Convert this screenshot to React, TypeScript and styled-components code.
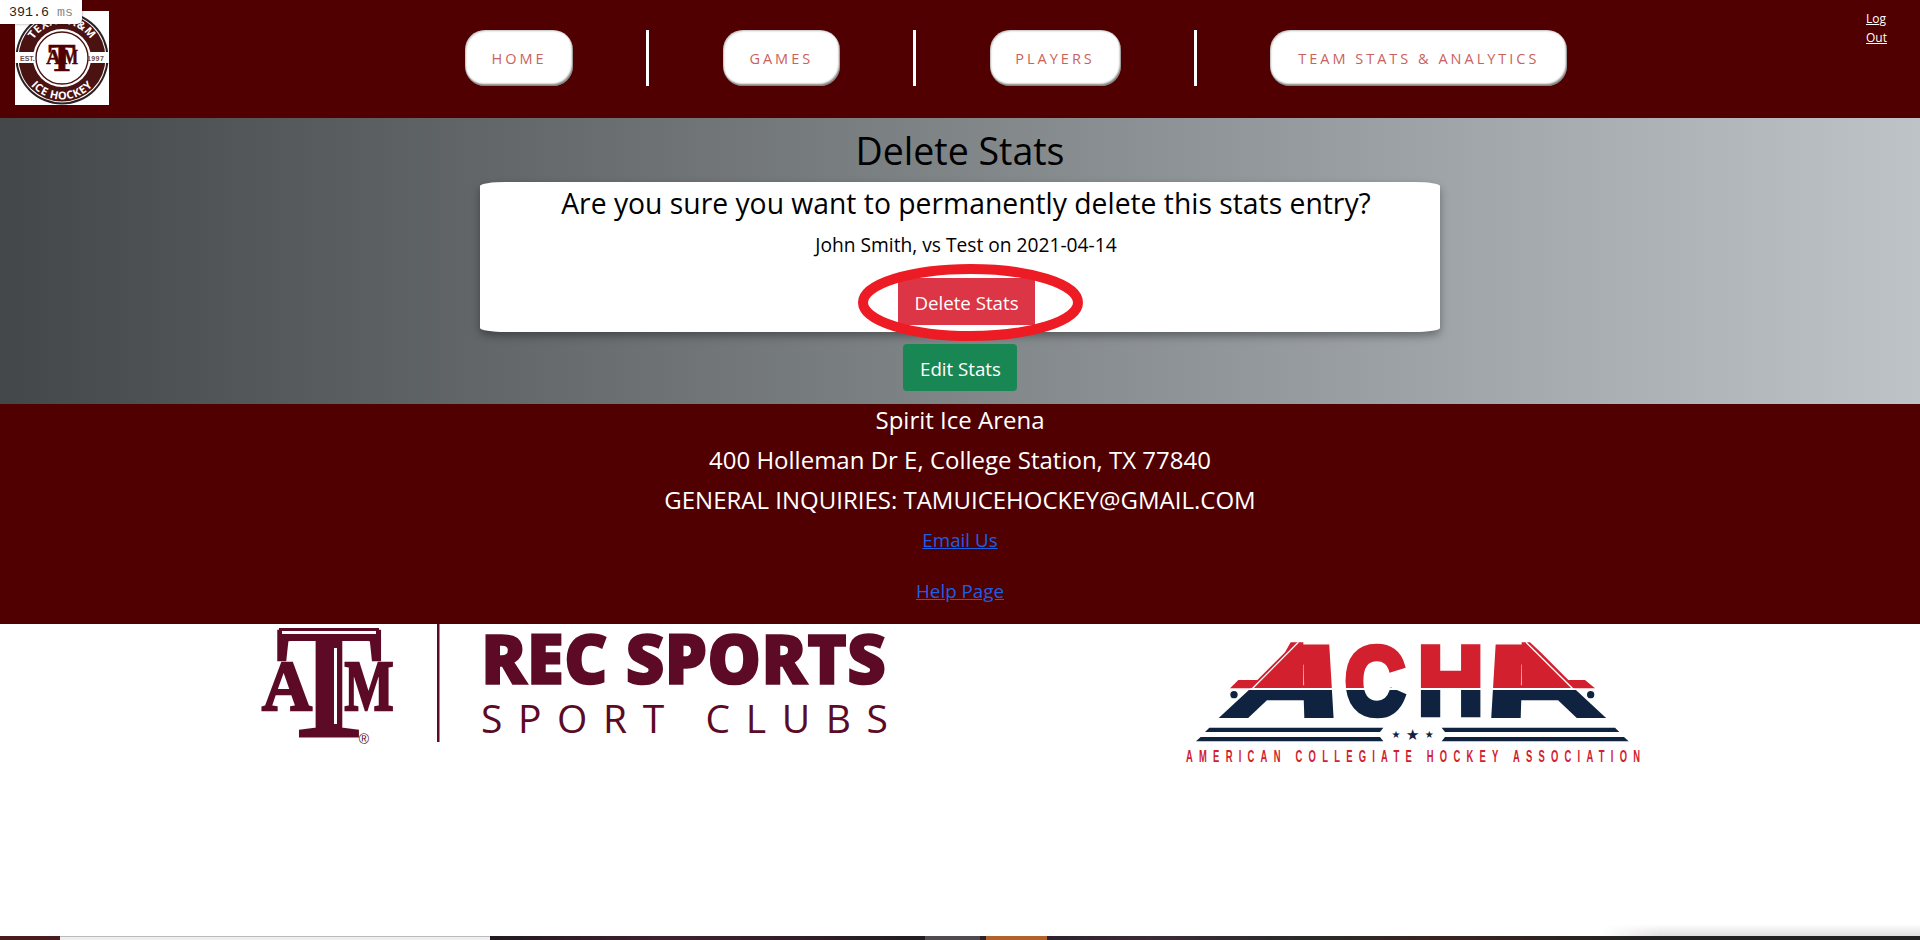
import React from 'react';
import styled, { createGlobalStyle } from 'styled-components';

const Global = createGlobalStyle`
    html, body {
        margin: 0;
        padding: 0;
        background: #ffffff;
    }
    body {
        font-family: "Open Sans", "Noto Sans", "Liberation Sans", sans-serif;
    }
`;

const Page = styled.div`
    position: relative;
    display: flex;
    flex-direction: column;
    height: 940px;
    overflow: hidden;
`;

const Timer = styled.div`
    position: absolute;
    top: 0;
    left: 0;
    width: 82px;
    height: 24px;
    display: flex;
    align-items: center;
    justify-content: center;
    gap: 8px;
    background: #ffffff;
    border-bottom-right-radius: 5px;
    box-shadow: 0 0 3px rgba(0, 0, 0, 0.4);
    font-family: "Liberation Mono", monospace;
    font-size: 13.3px;
    color: #222222;
    z-index: 10;
    span {
        color: #888888;
    }
`;

const Header = styled.header`
    display: flex;
    align-items: flex-start;
    height: 118px;
    padding-left: 15px;
    background-color: #500000;
`;

const LogoBox = styled.div`
    width: 94px;
    height: 94px;
    margin-top: 11px;
    background: #ffffff;
    svg {
        display: block;
    }
`;

const Nav = styled.nav`
    display: flex;
    align-items: center;
    gap: 73.4px;
    height: 56px;
    margin-top: 30px;
    margin-left: 356px;
`;

const NavButton = styled.a<{ $w: number }>`
    display: flex;
    align-items: center;
    justify-content: center;
    box-sizing: border-box;
    width: ${({ $w }) => $w}px;
    height: 56px;
    background: #ffffff;
    border-radius: 20px;
    box-shadow: inset -1px -2px 2px rgba(0, 0, 0, 0.5), inset 1px 1px 2px rgba(0, 0, 0, 0.25);
    color: #c9625c;
    font-size: 14.5px;
    letter-spacing: 3px;
    white-space: nowrap;
`;

const NavDivider = styled.div`
    width: 3px;
    height: 56px;
    background: #ffffff;
`;

const LogOut = styled.a`
    width: 24px;
    margin-left: auto;
    margin-right: 30px;
    margin-top: 9px;
    color: #ffffff;
    font-size: 12px;
    line-height: 19px;
    text-decoration: underline;
`;

const Hero = styled.section`
    display: flex;
    flex-direction: column;
    align-items: center;
    padding-bottom: 13px;
    background: linear-gradient(to right, #434749, #bdc3c7);
`;

const Title = styled.h2`
    margin: 0;
    height: 64px;
    line-height: 66px;
    font-size: 37.5px;
    font-weight: 400;
    color: #000000;
`;

const Card = styled.div`
    box-sizing: border-box;
    display: flex;
    flex-direction: column;
    align-items: center;
    width: 960px;
    height: 150px;
    padding-left: 12px;
    background: #ffffff;
    border-radius: 26px / 4px;
    box-shadow: 0 4px 8px rgba(0, 0, 0, 0.35);
`;

const Question = styled.h3`
    margin: 0;
    line-height: 42px;
    font-size: 28.3px;
    font-weight: 400;
    color: #000000;
`;

const Detail = styled.p`
    margin: 7px 0 0;
    line-height: 28px;
    font-size: 19.2px;
    color: #000000;
`;

const DeleteWrap = styled.div`
    position: relative;
    margin-top: 19px;
`;

const Button = styled.button<{ $tone: 'red' | 'green' }>`
    display: block;
    border: 0;
    padding: 0 0 0 1px;
    height: 47px;
    width: ${({ $tone }) => ($tone === 'red' ? 137 : 114)}px;
    border-radius: ${({ $tone }) => ($tone === 'red' ? 0 : 4)}px;
    background: ${({ $tone }) => ($tone === 'red' ? '#dc3545' : '#198754')};
    color: #ffffff;
    font-family: inherit;
    font-size: 18.7px;
    line-height: 49px;
`;

const EditButton = styled(Button)`
    margin-top: 12px;
`;

const Scribble = styled.svg`
    position: absolute;
    left: -40px;
    top: -14px;
    pointer-events: none;
`;

const Footer = styled.footer`
    display: flex;
    flex-direction: column;
    align-items: center;
    gap: 8px;
    height: 220px;
    background-color: #500000;
    color: #ffffff;
`;

const FooterLine = styled.p`
    margin: 0;
    line-height: 32px;
    font-size: 24px;
`;

const FooterLink = styled.a<{ $gap?: number }>`
    margin-top: ${({ $gap }) => $gap || 0}px;
    line-height: 32px;
    font-size: 18.8px;
    color: #1a5fe6;
    text-decoration: underline;
`;

const Sponsors = styled.section`
    flex: 1;
    display: flex;
    align-items: flex-start;
    padding-left: 262px;
    background: #ffffff;
    position: relative;
    svg {
        display: block;
        overflow: visible;
    }
`;

const AchaSlot = styled.div`
    margin-left: 278px;
    margin-top: 1px;
`;

const BottomShade = styled.div`
    position: absolute;
    right: 0;
    bottom: 0;
    width: 320px;
    height: 12px;
    background: linear-gradient(to bottom, rgba(0, 0, 0, 0), rgba(0, 0, 0, 0.12));
    mask-image: linear-gradient(to right, transparent, #000 60px);
`;

const Strip = styled.div`
    display: flex;
    height: 4px;
`;

const StripPart = styled.div<{ $w?: number; $bg: string }>`
    flex: ${({ $w }) => ($w ? `0 0 ${$w}px` : '1')};
    background: ${({ $bg }) => $bg};
`;

const MAROON = '#5c0a26';
const RED = '#d2202f';
const NAVY = '#0f2240';

const TeamLogo = () => (
    <svg width="94" height="94" viewBox="0 0 94 94">
        <defs>
            <path id="arcTop" d="M 13 47 A 34 34 0 0 1 81 47" />
            <path id="arcBottom" d="M 5.5 47 A 41.5 41.5 0 0 0 88.5 47" />
        </defs>
        <circle cx="47" cy="47" r="46.5" fill="#2a2022" />
        <circle cx="47" cy="47" r="44.5" fill="#ffffff" />
        <circle cx="47" cy="47" r="43.5" fill="#4b1212" />
        <rect x="0" y="41" width="94" height="11" fill="#ffffff" />
        <circle cx="47" cy="47" r="29" fill="#ffffff" />
        <circle cx="47" cy="47" r="26" fill="none" stroke="#4b1212" strokeWidth="1.4" />
        <circle cx="47" cy="47" r="24.5" fill="#ffffff" />
        <text fontFamily="Open Sans, sans-serif" fontWeight="700" fontSize="11" fill="#ffffff" letterSpacing="0.6" textAnchor="middle">
            <textPath href="#arcTop" startOffset="50%">TEXAS A&amp;M</textPath>
        </text>
        <text fontFamily="Open Sans, sans-serif" fontWeight="700" fontSize="11" fill="#ffffff" letterSpacing="0.6" textAnchor="middle">
            <textPath href="#arcBottom" startOffset="50%">ICE HOCKEY</textPath>
        </text>
        <text x="5" y="49.5" fontFamily="Liberation Sans, sans-serif" fontWeight="700" fontSize="7" fill="#6b4a4c">EST.</text>
        <text x="72" y="49.5" fontFamily="Liberation Sans, sans-serif" fontWeight="700" fontSize="7" letterSpacing="0.4" fill="#6b4a4c">1997</text>
        <text x="47" y="60" textAnchor="middle" fontFamily="Liberation Serif, serif" fontWeight="700" fontSize="41" fill="#500000" stroke="#500000" strokeWidth="0.6">T</text>
        <text x="38.5" y="53" textAnchor="middle" fontFamily="Liberation Serif, serif" fontWeight="700" fontSize="20" fill="#500000" stroke="#500000" strokeWidth="0.6">A</text>
        <text x="55.5" y="53" textAnchor="middle" fontFamily="Liberation Serif, serif" fontWeight="700" fontSize="20" fill="#500000" stroke="#500000" strokeWidth="0.6" textLength="15" lengthAdjust="spacingAndGlyphs">M</text>
    </svg>
);

const RecSportsLogo = () => (
    <svg width="630" height="122" viewBox="0 0 630 122">
        <text x="67" y="112" textAnchor="middle" fontFamily="Liberation Serif, serif" fontWeight="700" fontSize="160" fill={MAROON} stroke={MAROON} strokeWidth="2">T</text>
        <rect x="17" y="4" width="100" height="13" fill={MAROON} />
        <rect x="20" y="7" width="94" height="3" fill="#ffffff" />
        <rect x="72" y="24" width="3" height="76" fill="#ffffff" />
        <text x="25" y="86" textAnchor="middle" fontFamily="Liberation Serif, serif" fontWeight="700" fontSize="71" fill={MAROON} stroke={MAROON} strokeWidth="2.5" textLength="50" lengthAdjust="spacingAndGlyphs">A</text>
        <text x="107" y="86" textAnchor="middle" fontFamily="Liberation Serif, serif" fontWeight="700" fontSize="71" fill={MAROON} stroke={MAROON} strokeWidth="2.5" textLength="49" lengthAdjust="spacingAndGlyphs">M</text>
        <text x="102" y="120" textAnchor="middle" fontFamily="Liberation Sans, sans-serif" fontSize="14" fill={MAROON}>®</text>
        <rect x="175" y="0" width="2.5" height="118" fill={MAROON} />
        <text x="219" y="60" fontFamily="Open Sans, sans-serif" fontWeight="800" fontSize="69" fill={MAROON} stroke={MAROON} strokeWidth="1.5" textLength="405" lengthAdjust="spacingAndGlyphs">REC SPORTS</text>
        <text x="219" y="109" fontFamily="Open Sans, sans-serif" fontSize="39" fill={MAROON} textLength="407">SPORT CLUBS</text>
    </svg>
);

const achaLetter = {
    fontFamily: 'Liberation Sans, sans-serif',
    fontWeight: 700,
    fill: 'url(#achaFill)',
    stroke: 'url(#achaFill)',
    lengthAdjust: 'spacingAndGlyphs',
} as const;

const AchaLogo = () => (
    <svg width="490" height="150" viewBox="0 0 1470 450">
        <defs>
            <linearGradient id="achaFill" x1="0" y1="-226" x2="0" y2="0" gradientUnits="userSpaceOnUse">
                <stop offset="0.61" stopColor={RED} />
                <stop offset="0.61" stopColor="#ffffff" />
                <stop offset="0.635" stopColor="#ffffff" />
                <stop offset="0.635" stopColor={NAVY} />
            </linearGradient>
        </defs>
        <polygon points="180,190 205,165 262,165 345,82 362,52 400,52 400,190" fill={RED} />
        <polygon points="1275,190 1245,165 1195,165 1112,82 1080,52 1055,52 1055,190" fill={RED} />
        <text transform="translate(148 278) skewX(-27)" {...achaLetter} y="-5" fontSize="303" strokeWidth="12" textLength="342">A</text>
        <text transform="translate(515 278)" {...achaLetter} x="10" y="-10" fontSize="288" strokeWidth="20" textLength="180">C</text>
        <text transform="translate(742 278)" {...achaLetter} x="2" y="-10" fontSize="288" strokeWidth="20" textLength="196">H</text>
        <text transform="translate(965 278) skewX(27)" {...achaLetter} y="-5" fontSize="303" strokeWidth="12" textLength="342">A</text>
        <line x1="248" y1="190" x2="385" y2="52" stroke="#ffffff" strokeWidth="4" />
        <line x1="1207" y1="190" x2="1068" y2="52" stroke="#ffffff" strokeWidth="4" />
        <circle cx="192" cy="209" r="13" fill={NAVY} stroke="#ffffff" strokeWidth="4" />
        <circle cx="1262" cy="209" r="13" fill={NAVY} stroke="#ffffff" strokeWidth="4" />
        <polygon points="118,308 640,308 630,321 105,321" fill={NAVY} />
        <polygon points="92,336 630,336 640,349 78,349" fill={NAVY} />
        <polygon points="815,308 1335,308 1348,321 825,321" fill={NAVY} />
        <polygon points="825,336 1362,336 1376,349 815,349" fill={NAVY} />
        <text x="678" y="340" textAnchor="middle" fontFamily="DejaVu Sans, sans-serif" fontSize="30" fill={NAVY}>★</text>
        <text x="728" y="346" textAnchor="middle" fontFamily="DejaVu Sans, sans-serif" fontSize="46" fill={NAVY}>★</text>
        <text x="778" y="340" textAnchor="middle" fontFamily="DejaVu Sans, sans-serif" fontSize="30" fill={NAVY}>★</text>
        <text transform="scale(0.6 1)" x="80" y="412" fontFamily="Liberation Sans, sans-serif" fontWeight="700" fontSize="47" fill={RED} textLength="2270">AMERICAN COLLEGIATE HOCKEY ASSOCIATION</text>
    </svg>
);

export default function App() {
    return (
        <Page>
            <Global />
            <Timer>391.6 <span>ms</span></Timer>
            <Header>
                <LogoBox><TeamLogo /></LogoBox>
                <Nav>
                    <NavButton $w={108}>HOME</NavButton>
                    <NavDivider />
                    <NavButton $w={117}>GAMES</NavButton>
                    <NavDivider />
                    <NavButton $w={131}>PLAYERS</NavButton>
                    <NavDivider />
                    <NavButton $w={297}>TEAM STATS &amp; ANALYTICS</NavButton>
                </Nav>
                <LogOut>Log Out</LogOut>
            </Header>
            <Hero>
                <Title>Delete Stats</Title>
                <Card>
                    <Question>Are you sure you want to permanently delete this stats entry?</Question>
                    <Detail>John Smith, vs Test on 2021-04-14</Detail>
                    <DeleteWrap>
                        <Button $tone="red">Delete Stats</Button>
                        <Scribble width="225" height="77" viewBox="0 0 225 77">
                            <ellipse cx="112.5" cy="38.5" rx="107.5" ry="33.5" fill="none" stroke="#ed1c24" strokeWidth="10" />
                        </Scribble>
                    </DeleteWrap>
                </Card>
                <EditButton $tone="green">Edit Stats</EditButton>
            </Hero>
            <Footer>
                <FooterLine>Spirit Ice Arena</FooterLine>
                <FooterLine>400 Holleman Dr E, College Station, TX 77840</FooterLine>
                <FooterLine>GENERAL INQUIRIES: TAMUICEHOCKEY@GMAIL.COM</FooterLine>
                <FooterLink>Email Us</FooterLink>
                <FooterLink $gap={11}>Help Page</FooterLink>
            </Footer>
            <Sponsors>
                <RecSportsLogo />
                <AchaSlot><AchaLogo /></AchaSlot>
                <BottomShade />
            </Sponsors>
            <Strip>
                <StripPart $w={60} $bg="#4a1c20" />
                <StripPart $w={430} $bg="linear-gradient(to bottom, #bbbbbb 1px, #eeeeee 1px)" />
                <StripPart $w={435} $bg="linear-gradient(to right, #221a20, #3f2030 40%, #221c20)" />
                <StripPart $w={55} $bg="#514a4f" />
                <StripPart $w={6} $bg="#2a2426" />
                <StripPart $w={61} $bg="#b0622a" />
                <StripPart $bg="linear-gradient(to right, #2e2230, #3a2a38 12%, #2a2a28 30%, #38241f 45%, #222222 70%)" />
            </Strip>
        </Page>
    );
}
